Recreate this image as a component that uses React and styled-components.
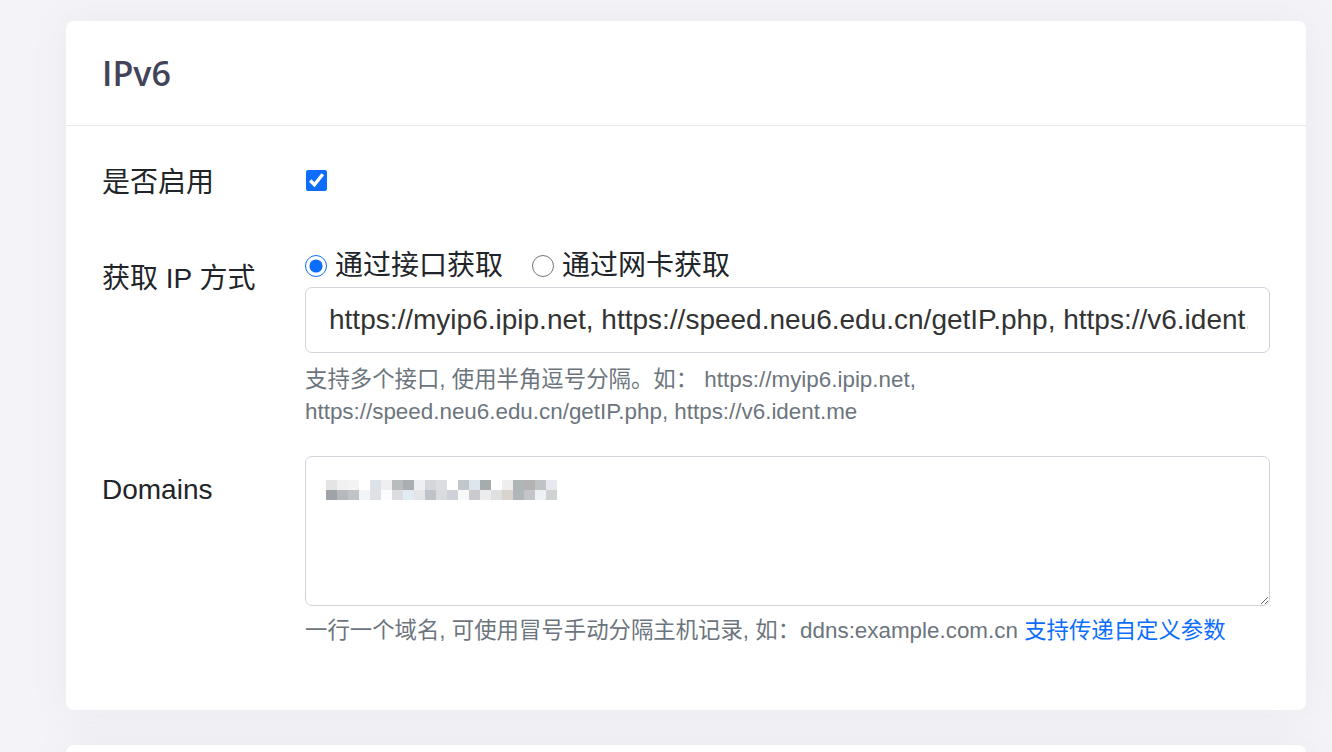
import React from "react";
import styled, { createGlobalStyle } from "styled-components";

const GlobalStyle = createGlobalStyle`
  html, body {
    margin: 0;
    padding: 0;
    background: #f4f4f8;
    font-family: "Liberation Sans", "Noto Sans CJK SC", sans-serif;
    color: #212529;
  }
  * { box-sizing: border-box; }
`;

const Page = styled.div`
  padding: 21px 26px 0 66px;
  display: flex;
  flex-direction: column;
  gap: 35px;
  height: 752px;
  overflow: hidden;
`;

const Card = styled.section`
  background: #fff;
  border-radius: 8px;
  box-shadow: 0 0 40px rgba(70, 70, 120, 0.07);
  flex-shrink: 0;
`;

const CardHeader = styled.header`
  padding: 31px 36px;
  border-bottom: 1px solid #e9e9ee;
`;

const Title = styled.h2`
  margin: 0;
  font-family: "Open Sans", "Noto Sans", sans-serif;
  font-size: 34px;
  line-height: 42px;
  font-weight: 600;
  color: #43435a;
`;

const CardBody = styled.div`
  padding: 23px 36px 35px;
  min-height: ${(p) => p.$minHeight || 0}px;
`;

const FormRow = styled.div`
  display: grid;
  grid-template-columns: 203px 1fr;
  margin-bottom: 28px;
`;

const FieldLabel = styled.label`
  font-size: 28px;
  line-height: 42px;
  padding: 13px 0;
  color: #212529;
`;

const Control = styled.div`
  display: flex;
  flex-direction: column;
  align-items: stretch;
  min-width: 0;
`;

const CheckBox = styled.input.attrs({ type: "checkbox" })`
  width: 21px;
  height: 21px;
  margin: 21px 0 0 1px;
  accent-color: #0d6efd;
  align-self: flex-start;
`;

const RadioGroup = styled.div`
  display: flex;
  align-items: center;
  height: 42px;
  gap: 29px;
`;

const RadioOption = styled.label`
  display: flex;
  align-items: center;
  gap: 8px;
  font-size: 28px;
  line-height: 42px;
  color: #212529;
`;

const Radio = styled.input.attrs({ type: "radio" })`
  width: 22px;
  height: 22px;
  margin: 0;
  accent-color: #0d6efd;
`;

const TextInput = styled.input`
  width: 100%;
  height: 66px;
  padding: 11px 21px 11px 23px;
  font-family: inherit;
  font-size: 28px;
  line-height: 42px;
  color: #333;
  border: 1px solid #ced4da;
  border-radius: 7px;
  background: #fff;
  outline: none;
`;

const TextAreaWrap = styled.div`
  position: relative;
`;

const TextArea = styled.textarea`
  display: block;
  width: 100%;
  height: 150px;
  padding: 11px 21px 11px 23px;
  font-family: inherit;
  font-size: 28px;
  line-height: 42px;
  color: #333;
  border: 1px solid #ced4da;
  border-radius: 7px;
  background: #fff;
  outline: none;
  resize: vertical;
`;

const Mosaic = styled.svg`
  position: absolute;
  left: 21px;
  top: 22px;
  pointer-events: none;
`;

const HelpText = styled.div`
  margin-top: ${(p) => p.$mt || 9}px;
  font-size: 22.4px;
  line-height: 32px;
  color: #6c757d;
`;

const HelpLink = styled.a`
  color: #0d6efd;
  text-decoration: none;
`;

const row1 = ["#e4e4e4","#f0f0f0","#f3f3f3","#ffffff","#dde1e8","#efeff1","#b9bcbf","#a9aeb1","#eeeff2","#d6d7db","#dcdde0","#ffffff","#c3c6ca","#dde6ee","#a6abae","#ffffff","#eeeeee","#b0b6b8","#b5b2b3","#c0c3c6","#e5e9ee"];
const row2 = ["#9fa3a8","#b5b8bc","#c1c4c7","#f1f5f7","#dfe1e4","#fbfcfd","#dadcdf","#e1ebf2","#e3e5e8","#bdc3c9","#d9dbde","#ced1d5","#f8f8f8","#c9cbcf","#eaecee","#dfe0e0","#d9d3cd","#b1b7b9","#c3c5cb","#eef1f5","#cfd2d3"];

function Pixelated() {
  const size = 11;
  return (
    <Mosaic width={size * row1.length + 2} height={24} viewBox={`0 0 ${size * row1.length + 2} 24`}>
      {row1.map((c, i) => (
        <rect key={"a" + i} x={i * size} y={2} width={size} height={10} fill={c} />
      ))}
      {row2.map((c, i) => (
        <rect key={"b" + i} x={i * size} y={12} width={size} height={10} fill={c} />
      ))}
    </Mosaic>
  );
}

export default function App() {
  return (
    <>
      <GlobalStyle />
      <Page>
        <Card>
          <CardHeader>
            <Title>IPv6</Title>
          </CardHeader>
          <CardBody>
            <FormRow>
              <FieldLabel>是否启用</FieldLabel>
              <Control>
                <CheckBox defaultChecked />
              </Control>
            </FormRow>
            <FormRow>
              <FieldLabel>获取 IP 方式</FieldLabel>
              <Control>
                <RadioGroup>
                  <RadioOption>
                    <Radio name="ipv6way" defaultChecked />
                    通过接口获取
                  </RadioOption>
                  <RadioOption>
                    <Radio name="ipv6way" />
                    通过网卡获取
                  </RadioOption>
                </RadioGroup>
                <TextInput
                  type="text"
                  readOnly
                  value="https://myip6.ipip.net, https://speed.neu6.edu.cn/getIP.php, https://v6.ident.me"
                />
                <HelpText $mt={11}>
                  支持多个接口, 使用半角逗号分隔。如： https://myip6.ipip.net, https://speed.neu6.edu.cn/getIP.php, https://v6.ident.me
                </HelpText>
              </Control>
            </FormRow>
            <FormRow>
              <FieldLabel>Domains</FieldLabel>
              <Control>
                <TextAreaWrap>
                  <TextArea readOnly value="" />
                  <Pixelated />
                </TextAreaWrap>
                <HelpText $mt={9}>
                  一行一个域名, 可使用冒号手动分隔主机记录, 如：ddns:example.com.cn{" "}
                  <HelpLink href="#">支持传递自定义参数</HelpLink>
                </HelpText>
              </Control>
            </FormRow>
          </CardBody>
        </Card>
        <Card>
          <CardBody $minHeight={300} />
        </Card>
      </Page>
    </>
  );
}
